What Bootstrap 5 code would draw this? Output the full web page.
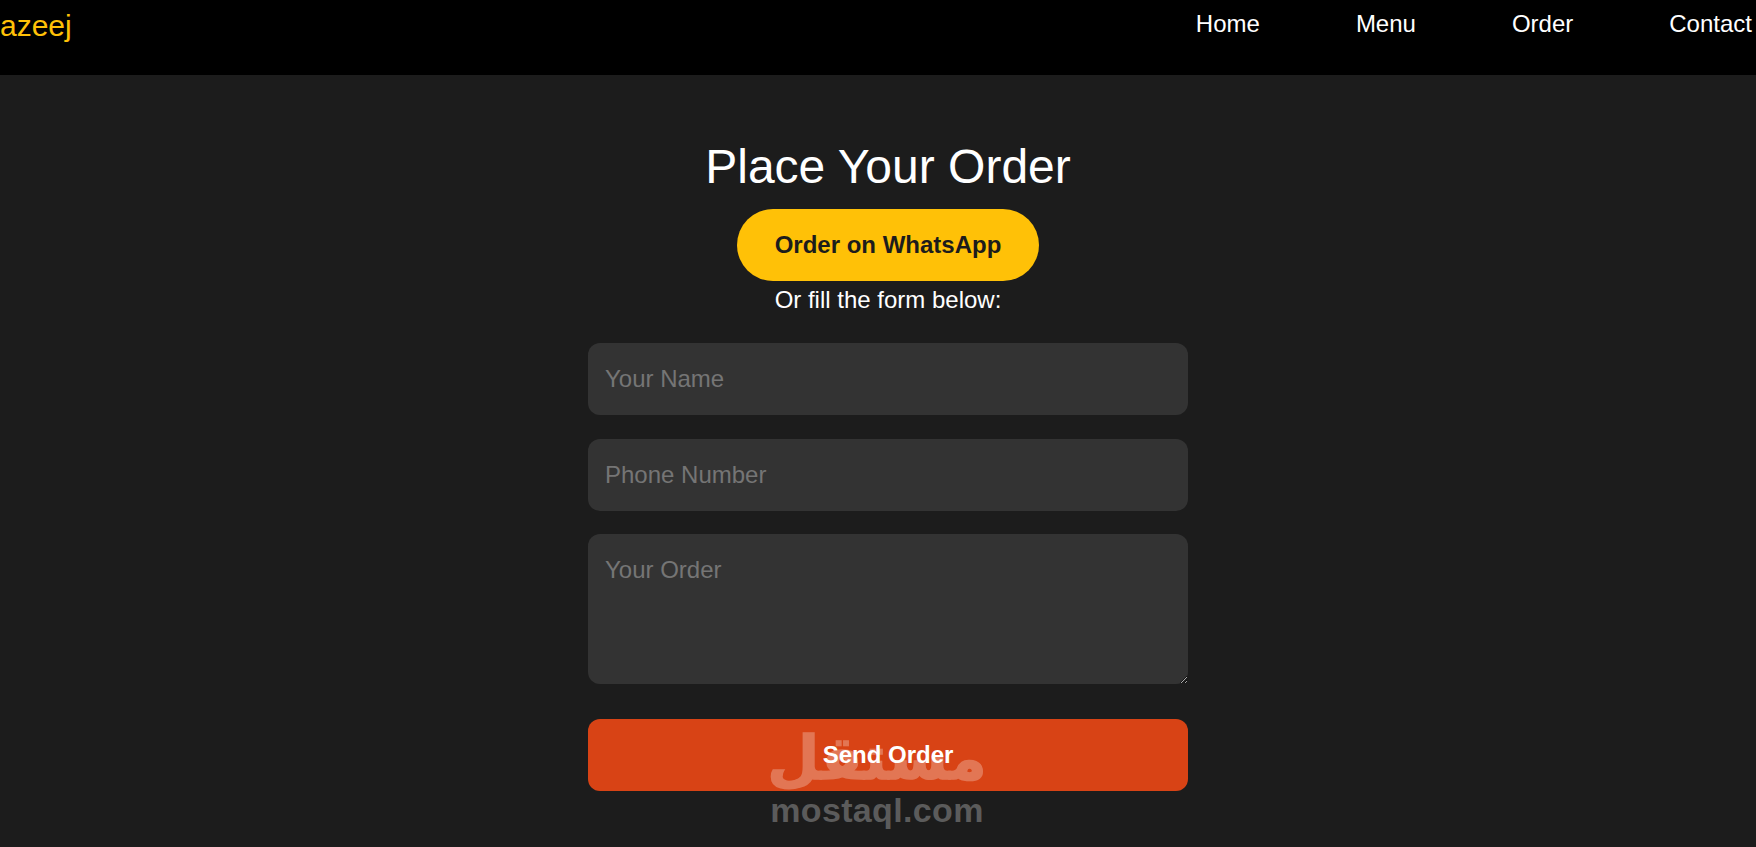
<!DOCTYPE html>
<html lang="en">
<head>
<meta charset="utf-8">
<title>Place Your Order</title>
<link rel="stylesheet" href="https://cdn.jsdelivr.net/npm/bootstrap@5.3.0/dist/css/bootstrap.min.css">
<style>
html,body{height:100%}
body{background:#1c1c1c;color:#fff;font-family:"Liberation Sans",Arial,sans-serif;font-size:24px;overflow:hidden}
.topbar{background:#000;height:75px;padding-right:4px}
.brandname{color:#ffc107;font-size:30px;line-height:52px;text-decoration:none}
.toplinks{gap:96px;margin:0;padding:0;list-style:none}
.toplinks a{color:#fff;font-size:24px;line-height:48px;text-decoration:none}
.ordersec{padding:63px 0 0 20px;width:100%}
.ordertitle{font-size:48px;font-weight:400;line-height:57.6px;margin:0 0 13px}
.wabtn{background:#ffc107;border:0;border-radius:36px;color:#1c1c1c;font-size:24px;font-weight:700;line-height:36px;padding:18px 38px}
.wabtn:hover{background:#ffc107;color:#1c1c1c}
.ornote{font-size:24px;line-height:36px;margin:1px 0 25.4px}
.orderform{width:600px;gap:24px}
.orderform .form-control{background:#333;border:0;border-radius:12px;color:#fff;font-size:24px;line-height:36px;padding:18px 17px;height:72px}
.orderform .form-control::placeholder{color:#757575}
.orderform textarea.form-control{height:150px;padding-top:18px;margin:-1px 0 11px}
.sendbtn{background:#d84315;border:0;border-radius:12px;color:#fff;font-size:24px;font-weight:700;line-height:36px;padding:18px;height:72px}
.sendbtn:hover{background:#d84315;color:#fff}
.wmark{position:absolute;left:762px;top:725px;width:230px;pointer-events:none;text-align:center;font-family:"DejaVu Sans",sans-serif;font-weight:700}
.wmark-ar{color:#fff;opacity:.27;font-size:60px;line-height:67px;white-space:nowrap;-webkit-text-stroke:1.5px #fff}
.wmark-en{color:#5b5b5b;font-family:"Liberation Sans",sans-serif;font-size:34px;line-height:36px;letter-spacing:.35px;white-space:nowrap}
</style>
</head>
<body>
<nav class="topbar d-flex justify-content-between align-items-start">
  <a class="brandname" href="#">azeej</a>
  <ul class="toplinks d-flex">
    <li><a href="#">Home</a></li>
    <li><a href="#">Menu</a></li>
    <li><a href="#">Order</a></li>
    <li><a href="#">Contact</a></li>
  </ul>
</nav>
<main class="ordersec d-flex flex-column align-items-center text-center">
  <h1 class="ordertitle">Place Your Order</h1>
  <a class="btn wabtn" href="#">Order on WhatsApp</a>
  <p class="ornote">Or fill the form below:</p>
  <form class="orderform d-flex flex-column">
    <input class="form-control" type="text" placeholder="Your Name">
    <input class="form-control" type="tel" placeholder="Phone Number">
    <textarea class="form-control" placeholder="Your Order"></textarea>
    <button class="btn sendbtn" type="button">Send Order</button>
  </form>
</main>
<div class="wmark">
  <div class="wmark-ar" dir="rtl" lang="ar">مستقل</div>
  <div class="wmark-en">mostaql.com</div>
</div>
</body>
</html>
